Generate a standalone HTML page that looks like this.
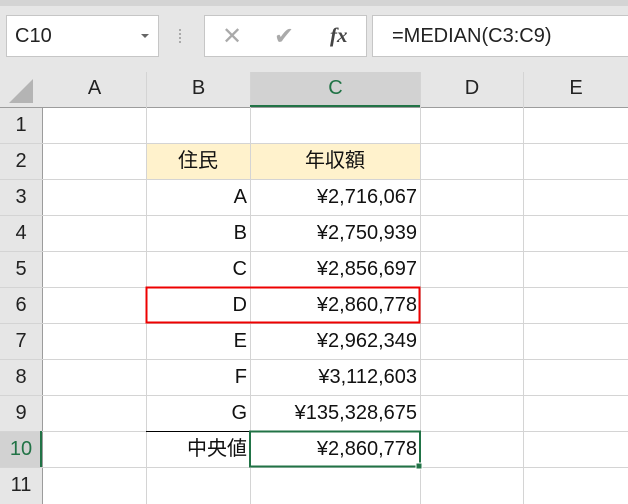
<!DOCTYPE html>
<html><head><meta charset="utf-8"><style>
*{margin:0;padding:0;box-sizing:border-box}
body{width:628px;height:504px;background:#e6e6e6;position:relative;overflow:hidden;font-family:"Liberation Sans","Noto Sans CJK JP",sans-serif;}
.a{position:absolute}
.box{background:#fff;border:1px solid #c6c6c6}
.hdr{color:#222;font-size:20px;text-align:center;line-height:33px;height:33px}
.cell{font-size:20px;color:#111;line-height:36px}
</style></head><body>
<div class="a" style="left:0;top:0;width:628px;height:6px;background:#d4d4d4"></div>
<div class="a box" style="left:6px;top:15px;width:153px;height:42px;font-size:20px;line-height:40px;padding-left:8px;color:#222">C10</div>
<div class="a" style="left:141px;top:34px;border-left:4px solid transparent;border-right:4px solid transparent;border-top:4px solid #666"></div>
<div class="a" style="left:179px;top:29px;width:2px;height:14px;border-left:2px dotted #aaa"></div>
<div class="a box" style="left:204px;top:15px;width:163px;height:42px"></div>
<div class="a" style="left:222px;top:22px;font-size:24px;color:#aaa">✕</div>
<div class="a" style="left:274px;top:22px;font-size:24px;color:#aaa">✔</div>
<div class="a" style="left:330px;top:23px;font-size:21px;color:#444;font-family:'Liberation Serif',serif;font-style:italic;font-weight:bold">fx</div>
<div class="a box" style="left:372px;top:15px;width:270px;height:42px;font-size:20px;line-height:40px;padding-left:19px;color:#222">=MEDIAN(C3:C9)</div>
<div class="a" style="left:0;top:72px;width:628px;height:432px;background:#fff"></div>
<svg class="a" style="left:0;top:72px" width="628" height="432">
<rect x="0" y="0" width="628" height="35" fill="#e6e6e6"/>
<rect x="0" y="0" width="42" height="432" fill="#e6e6e6"/>
<rect x="250" y="0" width="170" height="35" fill="#d2d2d2"/>
<rect x="0" y="359" width="42" height="36" fill="#d2d2d2"/>
<polygon points="9,31 33,31 33,7" fill="#b4b4b4"/>
<rect x="146" y="71" width="274" height="36" fill="#fff2cc"/>
<g stroke="#d4d4d4" stroke-width="1">
<line x1="42.5" y1="35" x2="42.5" y2="432" stroke="#9c9c9c"/>
<line x1="0" y1="35.5" x2="628" y2="35.5" stroke="#9c9c9c"/>
<line x1="146.5" y1="0" x2="146.5" y2="432"/>
<line x1="250.5" y1="0" x2="250.5" y2="432"/>
<line x1="420.5" y1="0" x2="420.5" y2="432"/>
<line x1="523.5" y1="0" x2="523.5" y2="432"/>
<line x1="0" y1="71.5" x2="628" y2="71.5"/><line x1="0" y1="107.5" x2="628" y2="107.5"/>
<line x1="0" y1="143.5" x2="628" y2="143.5"/><line x1="0" y1="179.5" x2="628" y2="179.5"/>
<line x1="0" y1="215.5" x2="628" y2="215.5"/><line x1="0" y1="251.5" x2="628" y2="251.5"/>
<line x1="0" y1="287.5" x2="628" y2="287.5"/><line x1="0" y1="323.5" x2="628" y2="323.5"/>
<line x1="0" y1="359.5" x2="628" y2="359.5"/><line x1="0" y1="395.5" x2="628" y2="395.5"/>
</g>
<line x1="250" y1="34" x2="420" y2="34" stroke="#217346" stroke-width="2"/>
<line x1="41" y1="359" x2="41" y2="395" stroke="#217346" stroke-width="2"/>
<rect x="146.5" y="215.5" width="273" height="35" fill="none" stroke="#e00" stroke-width="2"/>
<line x1="146" y1="359.5" x2="250" y2="359.5" stroke="#000"/>
<rect x="250" y="359.5" width="170" height="35" fill="none" stroke="#217346" stroke-width="2"/>
<rect x="416" y="391" width="6" height="6" fill="#217346" stroke="#fff"/>
</svg>
<div class="a hdr" style="left:43px;top:72px;width:103px">A</div>
<div class="a hdr" style="left:147px;top:72px;width:103px">B</div>
<div class="a hdr" style="left:251px;top:72px;width:169px;color:#217346">C</div>
<div class="a hdr" style="left:421px;top:72px;width:102px">D</div>
<div class="a hdr" style="left:524px;top:72px;width:104px">E</div>
<div class="a" style="left:0;top:107px;width:42px;font-size:20px;text-align:center;line-height:36px;color:#222">1<br>2<br>3<br>4<br>5<br>6<br>7<br>8<br>9<br><span style="color:#217346">10</span><br>11</div>
<div class="a cell" style="left:146px;top:143px;width:104px;text-align:center">住民</div>
<div class="a cell" style="left:250px;top:143px;width:170px;text-align:center">年収額</div>
<div class="a cell" style="left:146px;top:179px;width:101px;text-align:right">A<br>B<br>C<br>D<br>E<br>F<br>G<br>中央値</div>
<div class="a cell" style="left:250px;top:179px;width:167px;text-align:right">¥2,716,067<br>¥2,750,939<br>¥2,856,697<br>¥2,860,778<br>¥2,962,349<br>¥3,112,603<br>¥135,328,675<br>¥2,860,778</div>
</body></html>
